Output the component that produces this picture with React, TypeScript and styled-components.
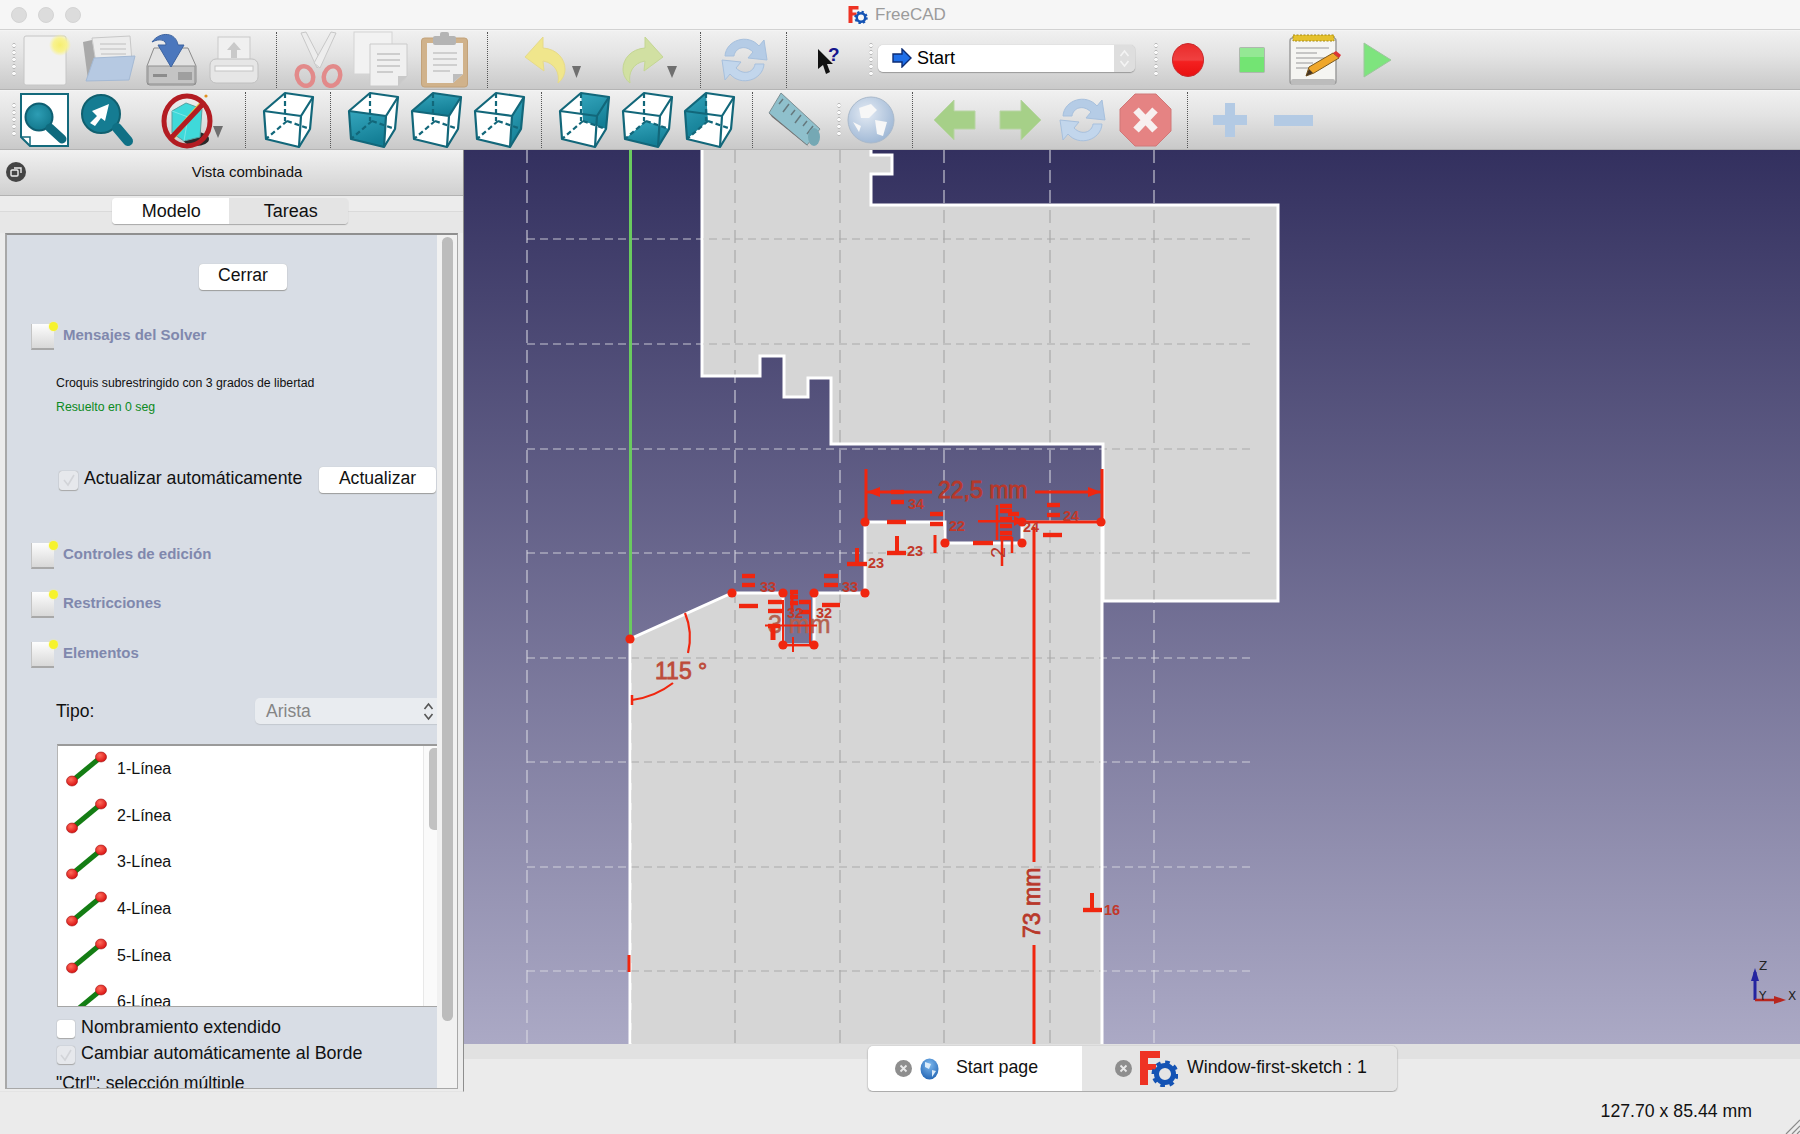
import React from 'react';
import styled, { createGlobalStyle } from 'styled-components';

const GlobalStyle = createGlobalStyle`
    html, body {
        margin: 0;
        padding: 0;
        background: #ebebeb;
    }
    body {
        font-family: "Liberation Sans", Arial, sans-serif;
        color: #111;
    }
`;

const Page = styled.div`
    width: 1800px;
    height: 1134px;
    display: flex;
    flex-direction: column;
    overflow: hidden;
    background: #ebebeb;
`;

const TitleBar = styled.div`
    height: 30px;
    box-sizing: border-box;
    flex-shrink: 0;
    display: flex;
    align-items: center;
    padding-left: 11px;
    gap: 11px;
    position: relative;
    background: #f6f6f6;
    border-bottom: 1px solid #d2d2d2;
`;

const Light = styled.span`
    width: 16px;
    height: 16px;
    border-radius: 50%;
    background: #dcdcdc;
    border: 1px solid #d4d4d4;
    box-sizing: border-box;
`;

const TitleCenter = styled.div`
    position: absolute;
    left: 848px;
    top: 5px;
    display: flex;
    align-items: center;
    gap: 7px;
    font-size: 17px;
    color: #9b9b9b;
`;

const ToolbarRow = styled.div`
    height: 60px;
    flex-shrink: 0;
    box-sizing: border-box;
    display: flex;
    align-items: center;
    padding-left: 11px;
    background: linear-gradient(#f0f0f0, #e4e4e4 40%, #c9c9c9);
    border-bottom: 1px solid #b4b4b4;
    border-top: 1px solid #f4f4f4;
`;

const Tool = styled.svg<{ $gap?: number }>`
    flex-shrink: 0;
    margin-left: ${p => p.$gap ?? 0}px;
    overflow: visible;
`;

const Sep = styled.div<{ $gap: number }>`
    width: 0;
    height: 56px;
    flex-shrink: 0;
    margin-left: ${p => p.$gap}px;
    border-left: 1px dotted #555;
`;

const Handle = styled.div<{ $gap?: number }>`
    width: 6px;
    height: 36px;
    flex-shrink: 0;
    margin-left: ${p => p.$gap ?? 0}px;
    background-image: radial-gradient(circle, #fafafa 1.6px, #b5b5b5 2px, transparent 2.6px);
    background-size: 6px 7px;
`;

const Combo = styled.div<{ $gap: number }>`
    width: 257px;
    height: 27px;
    flex-shrink: 0;
    margin-left: ${p => p.$gap}px;
    margin-bottom: 4px;
    display: flex;
    border-radius: 5px;
    overflow: hidden;
    box-shadow: 0 1px 1px #9a9a9a, 0 0 1px #aaa;
`;

const ComboField = styled.div`
    flex: 1;
    display: flex;
    align-items: center;
    gap: 5px;
    padding-left: 14px;
    background: #fff;
    font-size: 18px;
    color: #000;
`;

const ComboStepper = styled.div`
    width: 21px;
    display: flex;
    align-items: center;
    justify-content: center;
    background: #dedede;
`;

const Main = styled.div`
    display: flex;
    height: 942px;
    flex-shrink: 0;
`;

const Panel = styled.div`
    width: 463px;
    flex-shrink: 0;
    display: flex;
    flex-direction: column;
    background: #ececec;
    border-right: 1px solid #8d8d8d;
    border-bottom: 1px solid #e4e4e4;
    height: 941px;
`;

const PanelHeader = styled.div`
    height: 46px;
    flex-shrink: 0;
    position: relative;
    display: flex;
    align-items: center;
    justify-content: center;
    font-size: 15px;
    background: linear-gradient(#f1f1f1, #d0d0d0);
    border-bottom: 1px solid #b2b2b2;
    box-sizing: border-box;
    padding-left: 31px;
    padding-bottom: 3px;
`;

const FloatButton = styled.span`
    position: absolute;
    left: 6px;
    top: 12px;
    width: 20px;
    height: 20px;
    border-radius: 50%;
    background: #454545;
    display: flex;
    align-items: center;
    justify-content: center;
`;

const TabRow = styled.div`
    height: 37px;
    flex-shrink: 0;
    padding: 2px 0 0 112px;
    box-sizing: border-box;
    background: linear-gradient(#ececec 15px, #dadada 15px, #dadada 16px, #e7e7e7 16px);
`;

const PanelTabs = styled.div`
    width: 236px;
    height: 26px;
    display: flex;
    border-radius: 4px;
    overflow: hidden;
    box-shadow: 0 1px 1px #a8a8a8;
`;

const PanelTab = styled.div<{ $active?: boolean }>`
    flex: 1;
    display: flex;
    align-items: center;
    justify-content: center;
    font-size: 18px;
    padding-left: ${p => (p.$active ? 2 : 5)}px;
    background: ${p => (p.$active ? '#fff' : '#e4e4e4')};
`;

const Pane = styled.div`
    width: 453px;
    height: 856px;
    margin-left: 5px;
    box-sizing: border-box;
    display: flex;
    border: 2px solid #a8a8a8;
    border-right-width: 1px;
    border-bottom-width: 1px;
    border-top-color: #8f8f8f;
`;

const PaneContent = styled.div`
    width: 430px;
    flex-shrink: 0;
    background: #d8dde5;
    overflow: hidden;
`;

const PaneGutter = styled.div`
    flex: 1;
    background: #f1f1f1;
    padding: 2px 0 0 5px;
`;

const PaneThumb = styled.div`
    width: 11px;
    height: 784px;
    border-radius: 6px;
    background: #bcbcbc;
`;

const PushButton = styled.div<{ $w: number }>`
    width: ${p => p.$w}px;
    height: 26px;
    flex-shrink: 0;
    display: flex;
    align-items: center;
    justify-content: center;
    padding-bottom: 3px;
    box-sizing: border-box;
    background: #fff;
    border-radius: 4px;
    font-size: 17.6px;
    box-shadow: 0 1px 1px #9c9c9c, 0 0 1px #b8b8b8;
`;

const CloseRow = styled.div`
    padding: 29px 0 0 192px;
`;

const TaskHeader = styled.div<{ $top: number }>`
    display: flex;
    margin: ${p => p.$top}px 0 0 24px;
    gap: 9px;
`;

const TaskIcon = styled.div`
    width: 23px;
    height: 26px;
    position: relative;
    background: linear-gradient(#fdfdfd, #d8d8d8);
    border-bottom: 2px solid #a8a8a8;
    border-left: 1px solid #c4c4c4;
    box-sizing: border-box;

    &::after {
        content: '';
        position: absolute;
        top: -2px;
        right: -4px;
        width: 9px;
        height: 9px;
        border-radius: 50%;
        background: #f6f22c;
        box-shadow: 0 0 2px #f8f48a;
    }
`;

const TaskTitle = styled.div`
    font-size: 15px;
    font-weight: bold;
    line-height: 22px;
    color: #8088ad;
`;

const Message = styled.div<{ $top: number; $green?: boolean }>`
    margin: ${p => p.$top}px 0 0 49px;
    font-size: 12.3px;
    line-height: 20px;
    color: ${p => (p.$green ? '#0c8a22' : '#111')};
`;

const AutoRow = styled.div`
    margin: 50px 1px 0 52px;
    height: 26px;
    display: flex;
    align-items: center;
    justify-content: space-between;
    font-size: 17.7px;
`;

const CheckGroup = styled.div`
    display: flex;
    align-items: center;
`;

const CheckBox = styled.span<{ $checked?: boolean; $size: number }>`
    width: ${p => p.$size}px;
    height: ${p => p.$size}px;
    flex-shrink: 0;
    box-sizing: border-box;
    border-radius: 3px;
    display: flex;
    align-items: center;
    justify-content: center;
    background: ${p => (p.$checked ? '#e6e8ec' : '#fff')};
    box-shadow: 0 0 1px #8d8d8d, 0 1px 1px #aaa;
`;

const CheckLabel = styled.span`
    margin-left: 6px;
    white-space: nowrap;
    padding-bottom: 3px;
`;

const TypeRow = styled.div`
    margin: 30px -8px 0 49px;
    height: 26px;
    display: flex;
    align-items: center;
    justify-content: space-between;
    font-size: 17.5px;
`;

const TypeSelect = styled.div`
    width: 190px;
    height: 26px;
    box-sizing: border-box;
    display: flex;
    align-items: center;
    justify-content: space-between;
    padding: 0 11px 0 11px;
    background: #e9ecf0;
    color: #858585;
    border-radius: 5px;
    box-shadow: 0 1px 1px #c4c8cf;
`;

const ElementList = styled.div`
    margin: 20px 0 0 50px;
    height: 263px;
    box-sizing: border-box;
    display: flex;
    background: #fff;
    border-top: 2px solid #9a9a9a;
    border-left: 1px solid #b5b5b5;
    border-bottom: 1px solid #a5a5a5;
    overflow: hidden;
`;

const ElementRows = styled.div`
    flex: 1;
    overflow: hidden;
`;

const ElementRow = styled.div`
    height: 46.6px;
    display: flex;
    align-items: center;
    padding-left: 8px;
    font-size: 16px;
    gap: 10px;
`;

const LineGlyph = styled.svg`
    flex-shrink: 0;
`;

const ListGutter = styled.div`
    width: 14px;
    flex-shrink: 0;
    background: #fafafa;
    border-left: 1px solid #e8e8e8;
    padding: 2px 0 0 5px;
    box-sizing: border-box;
`;

const ListThumb = styled.div`
    width: 9px;
    height: 82px;
    border-radius: 5px 0 0 5px;
    background: #c2c2c2;
`;

const OptionRow = styled.div<{ $top: number }>`
    margin: ${p => p.$top}px 0 0 50px;
    height: 18px;
    display: flex;
    align-items: center;
    font-size: 17.9px;
`;

const HintLine = styled.div`
    margin: 8px 0 0 49px;
    font-size: 17.6px;
    line-height: 22px;
    white-space: nowrap;
`;

const ViewColumn = styled.div`
    flex: 1;
    display: flex;
    flex-direction: column;
`;

const Viewport = styled.div`
    height: 894px;
    flex-shrink: 0;
    background: linear-gradient(#33305f, #aba9c5);
`;

const SketchArea = styled.svg`
    display: block;
`;

const TabStrip = styled.div`
    flex: 1;
    padding: 2px 0 0 404px;
    background: linear-gradient(#e1e1e1 15px, #ebebeb 15px);
`;

const DocTabs = styled.div`
    width: 529px;
    height: 45px;
    display: flex;
    border-radius: 5px;
    overflow: hidden;
    box-shadow: 0 1px 2px #999, 0 0 1px #aaa;
`;

const DocTab = styled.div<{ $active?: boolean; $w: number; $pad: number }>`
    width: ${p => p.$w}px;
    flex-shrink: 0;
    box-sizing: border-box;
    display: flex;
    align-items: center;
    gap: 8px;
    padding-left: ${p => p.$pad}px;
    font-size: 17.8px;
    background: ${p => (p.$active ? '#fff' : '#e5e5e5')};
`;

const DocTabLabel = styled.span<{ $gap: number }>`
    margin-left: ${p => p.$gap}px;
    white-space: nowrap;
    padding-bottom: 3px;
`;

const StatusBar = styled.div`
    flex: 1;
    position: relative;
    display: flex;
    justify-content: flex-end;
    align-items: center;
    padding: 0 48px 4px 0;
    font-size: 17.7px;
    background: #ebebeb;
`;

const Grip = styled.svg`
    position: absolute;
    right: 0;
    bottom: 0;
`;

type ToolProps = { gap?: number };

/* ---------- toolbar drawings ---------- */

const NewIcon = ({ gap }: ToolProps) => (
    <Tool $gap={gap} width="46" height="52" viewBox="0 0 46 52">
        <defs>
            <radialGradient id="newGlow">
                <stop offset="0" stopColor="#f6ee70" />
                <stop offset="0.6" stopColor="#f8f290" />
                <stop offset="1" stopColor="#f8f290" stopOpacity="0" />
            </radialGradient>
        </defs>
        <rect x="1" y="2" width="42" height="49" rx="2" fill="#f1f1f1" stroke="#c6c6c6" />
        <circle cx="37" cy="11" r="11" fill="url(#newGlow)" />
    </Tool>
);

const OpenIcon = ({ gap }: ToolProps) => (
    <Tool $gap={gap} width="56" height="48" viewBox="0 0 56 48">
        <path d="M3 6 L12 4 L20 44 L8 44 Z" fill="#a9a9a9" />
        <path d="M12 2 L50 0 L52 26 L18 40 Z" fill="#ececec" stroke="#c8c8c8" />
        <path d="M20 8 H46 M20 13 H46 M21 18 H46" stroke="#cdcdcd" strokeWidth="1.5" />
        <path d="M14 22 L55 20 L49 44 L6 45 Z" fill="#b6c9e2" stroke="#a4b9d4" />
    </Tool>
);

const SaveIcon = ({ gap }: ToolProps) => (
    <Tool $gap={gap} width="51" height="52" viewBox="0 0 51 52">
        <path d="M8 14 H42 L50 32 V48 Q50 51 47 51 H4 Q1 51 1 48 V32 Z" fill="#e2e2e2" stroke="#8b8b8b" />
        <rect x="2" y="32" width="47" height="18" fill="#c4c4c4" stroke="#8f8f8f" />
        <rect x="32" y="38" width="14" height="8" fill="#9f9f9f" />
        <rect x="7" y="40" width="14" height="3" fill="#8c8c8c" />
        <path d="M6 8 C14 -3 30 -2 32 11 L38 11 L25 33 L12 11 L20 11 C20 6 14 4 6 8 Z" fill="#4b77bd" stroke="#3d639f" />
    </Tool>
);

const PrintIcon = ({ gap }: ToolProps) => (
    <Tool $gap={gap} width="50" height="48" viewBox="0 0 50 48">
        <rect x="9" y="1" width="32" height="26" fill="#f0f0f0" stroke="#c9c9c9" />
        <path d="M25 6 L32 14 H28 V22 H22 V14 H18 Z" fill="#c9c9c9" />
        <rect x="1" y="23" width="48" height="24" rx="6" fill="#e6e6e6" stroke="#c0c0c0" />
        <rect x="6" y="30" width="38" height="5" fill="#f7f7f7" stroke="#c4c4c4" />
    </Tool>
);

const CutIcon = ({ gap }: ToolProps) => (
    <Tool $gap={gap} width="49" height="56" viewBox="0 0 49 56">
        <path d="M7 1 L12 0 L28 31 L23 36 Z" fill="#ededed" stroke="#c8c8c8" />
        <path d="M42 1 L37 0 L20 31 L26 36 Z" fill="#ededed" stroke="#c8c8c8" />
        <ellipse cx="11" cy="44" rx="8" ry="10" transform="rotate(-20 11 44)" fill="none" stroke="#e28a8a" strokeWidth="4.5" />
        <ellipse cx="38" cy="44" rx="8" ry="10" transform="rotate(20 38 44)" fill="none" stroke="#e28a8a" strokeWidth="4.5" />
    </Tool>
);

const CopyIcon = ({ gap }: ToolProps) => (
    <Tool $gap={gap} width="56" height="56" viewBox="0 0 56 56">
        <rect x="1" y="0" width="38" height="42" fill="#f2f2f2" stroke="#d4d4d4" />
        <path d="M17 12 H54 V44 L45 54 H17 Z" fill="#f0f0f0" stroke="#cacaca" />
        <path d="M45 54 L45 44 H54 Z" fill="#c9c9c9" />
        <path d="M24 22 H47 M24 28 H47 M24 34 H47 M24 40 H40" stroke="#cdcdcd" strokeWidth="2" />
    </Tool>
);

const PasteIcon = ({ gap }: ToolProps) => (
    <Tool $gap={gap} width="49" height="56" viewBox="0 0 49 56">
        <rect x="1.5" y="6" width="46" height="49" rx="3" fill="#d0b28b" stroke="#c2a27a" />
        <path d="M7 11 H43 V42 L33 51 H7 Z" fill="#efefef" />
        <path d="M33 51 L43 42 H33 Z" fill="#bdbdbd" />
        <path d="M13 21 H37 M13 27 H37 M13 33 H37 M13 39 H30" stroke="#cfcfcf" strokeWidth="2" />
        <rect x="13" y="4" width="23" height="9" rx="2" fill="#b4b4b4" />
        <rect x="20" y="0" width="9" height="6" rx="2" fill="#b4b4b4" />
    </Tool>
);

const ARROW_BACK = 'M0 20 L18 0 L18 11 C32 12 40 22 40 32 C40 38 37 43 33 46 C35 36 30 26 18 24 L19 34 Z';

const UndoIcon = ({ gap }: ToolProps) => (
    <Tool $gap={gap} width="40" height="46" viewBox="0 0 40 46">
        <path d={ARROW_BACK} fill="#f0e68c" stroke="#e6da8a" />
    </Tool>
);

const RedoIcon = ({ gap }: ToolProps) => (
    <Tool $gap={gap} width="40" height="46" viewBox="0 0 40 46">
        <path d={ARROW_BACK} transform="translate(40 0) scale(-1 1)" fill="#d1e0a2" stroke="#c4d694" />
    </Tool>
);

const MiniArrow = ({ gap, w }: ToolProps & { w: number }) => (
    <Tool $gap={gap} width={w} height="40" viewBox={`0 0 ${w} 40`}>
        <path d={`M0 26 H${w} L${w / 2} 38 Z`} fill="#6f6f6f" />
    </Tool>
);

const RefreshIcon = ({ gap }: ToolProps) => (
    <Tool $gap={gap} width="47" height="48" viewBox="0 0 47 48">
        <path d="M4 20 C5 4 27 -3 38 10 L43 4 L46 24 L27 22 L32 16 C24 8 14 12 13 20 Z" fill="#b5cce6" stroke="#a7c0dd" />
        <path d="M43 28 C42 44 20 51 9 38 L4 44 L1 24 L20 26 L15 32 C23 40 33 36 34 28 Z" fill="#c2d6ec" stroke="#a7c0dd" />
    </Tool>
);

const HelpIcon = ({ gap }: ToolProps) => (
    <Tool $gap={gap} width="24" height="30" viewBox="0 0 24 30">
        <path d="M0 4 L0 24 L5 20 L8 29 L12 27 L9 19 L15 19 Z" fill="#111" />
        <text x="10" y="16" fontSize="19" fontWeight="bold" fontFamily="Liberation Sans" fill="#14148c">?</text>
    </Tool>
);

const RecordIcon = ({ gap }: ToolProps) => (
    <Tool $gap={gap} width="32" height="34" viewBox="0 0 32 34">
        <defs>
            <linearGradient id="recFill" x1="0" y1="0" x2="0" y2="1">
                <stop offset="0" stopColor="#e92b2b" />
                <stop offset="0.5" stopColor="#f04040" />
                <stop offset="0.55" stopColor="#f42020" />
                <stop offset="1" stopColor="#e81010" />
            </linearGradient>
        </defs>
        <ellipse cx="16" cy="17" rx="15.5" ry="16.5" fill="url(#recFill)" stroke="#c9292c" />
    </Tool>
);

const StopSquare = ({ gap }: ToolProps) => (
    <Tool $gap={gap} width="26" height="26" viewBox="0 0 26 26">
        <rect x="0.5" y="0.5" width="25" height="25" rx="1" fill="#73e473" stroke="#aeb8ae" />
        <rect x="1" y="1" width="24" height="9" fill="#94e894" />
    </Tool>
);

const NotepadIcon = ({ gap }: ToolProps) => (
    <Tool $gap={gap} width="52" height="52" viewBox="0 0 52 52">
        <rect x="1" y="4" width="46" height="46" rx="3" fill="#f5f5f2" stroke="#9d9d9d" strokeWidth="1.5" />
        <rect x="2" y="45" width="44" height="6" rx="2" fill="#bcbcbc" />
        <rect x="4" y="1" width="41" height="6" fill="#e5c12d" stroke="#a38917" strokeDasharray="2 1.5" />
        <path d="M7 14 H40 M7 19 H28 M7 24 H38 M7 29 H24 M7 34 H20" stroke="#b7b7b7" strokeWidth="1.5" />
        <path d="M17 42 L20 33 L44 19 L50 24 L25 39 Z" fill="#efa72b" stroke="#7b5a20" />
        <path d="M17 42 L20 35 L24 39 Z" fill="#463626" />
        <path d="M44 19 L50 24 L52 21 L47 17 Z" fill="#d33" />
    </Tool>
);

const PlayIcon = ({ gap }: ToolProps) => (
    <Tool $gap={gap} width="29" height="36" viewBox="0 0 29 36">
        <path d="M1 1 L28 18 L1 35 Z" fill="#7ee47e" stroke="#9ec69e" />
    </Tool>
);

const FitAllIcon = ({ gap }: ToolProps) => (
    <Tool $gap={gap} width="51" height="55" viewBox="0 0 51 55">
        <defs>
            <radialGradient id="lensA" cx="0.45" cy="0.4" r="0.7">
                <stop offset="0" stopColor="#2d9db4" />
                <stop offset="1" stopColor="#0f7387" />
            </radialGradient>
        </defs>
        <path d="M2 1 H49 V53 H11 L2 44 Z" fill="#fff" stroke="#146a7c" strokeWidth="2" />
        <path d="M2 44 H11 V53" fill="none" stroke="#146a7c" strokeWidth="1.5" />
        <circle cx="20" cy="24" r="13.5" fill="url(#lensA)" stroke="#0f5f72" strokeWidth="2" />
        <path d="M31 35 L43 46" stroke="#0f6a7d" strokeWidth="9" strokeLinecap="round" />
    </Tool>
);

const FitSelIcon = ({ gap }: ToolProps) => (
    <Tool $gap={gap} width="54" height="55" viewBox="0 0 54 55">
        <circle cx="20" cy="21" r="19" fill="#157c92" stroke="#10606f" strokeWidth="2" />
        <path d="M9 30 L16 23 L11 18 L28 11 L24 28 L20 25 L14 33 Z" fill="#fff" />
        <path d="M36 35 L47 48" stroke="#0f7085" strokeWidth="10" strokeLinecap="round" />
    </Tool>
);

const NoPicIcon = ({ gap }: ToolProps) => (
    <Tool $gap={gap} width="51" height="55" viewBox="0 0 51 55">
        <ellipse cx="34" cy="46" rx="13" ry="7" fill="#2a2a2a" />
        <path d="M10 18 L24 10 L40 16 L38 44 L22 48 L10 40 Z" fill="#3fd9da" stroke="#5aa0a0" />
        <path d="M10 18 L26 24 L40 16 M26 24 L22 48" fill="none" stroke="#7ce7e7" />
        <path d="M9 46 L42 8" stroke="#e8c84a" strokeWidth="5" />
        <ellipse cx="25" cy="28" rx="23" ry="25" fill="none" stroke="#b31c22" strokeWidth="5" />
        <path d="M9 45 L42 10" stroke="#b31c22" strokeWidth="5" />
        <circle cx="44" cy="3" r="1.6" fill="#e09020" />
    </Tool>
);

type Face = 'front' | 'top' | 'right' | 'back' | 'bottom' | 'left';

const FACES: Record<Face, string> = {
    front: '1,19 38,24 36,55 3,47',
    top: '22,1 50,5 38,24 1,19',
    right: '38,24 50,5 47,37 36,55',
    back: '22,1 50,5 47,37 24,29',
    bottom: '3,47 36,55 47,37 24,29',
    left: '22,1 1,19 3,47 24,29',
};

const Cube = ({ gap, face }: ToolProps & { face?: Face }) => (
    <Tool $gap={gap} width="51" height="56" viewBox="0 0 51 56">
        <defs>
            <linearGradient id="cubeFace" x1="0" y1="0" x2="0.3" y2="1">
                <stop offset="0" stopColor="#35a6bd" />
                <stop offset="1" stopColor="#137e95" />
            </linearGradient>
        </defs>
        <polygon points="22,1 50,5 47,37 36,55 3,47 1,19" fill="#fff" />
        {face && <polygon points={FACES[face]} fill="url(#cubeFace)" />}
        <g fill="none" stroke="#12677a" strokeWidth="2.2" strokeLinejoin="round">
            <path d="M22 1 V29 M24 29 L3 47 M24 29 L47 37" strokeDasharray="5 3" />
            <polygon points="22,1 50,5 47,37 36,55 3,47 1,19" />
            <path d="M1 19 L38 24 L36 55 M38 24 L50 5" />
        </g>
    </Tool>
);

const RulerIcon = ({ gap }: ToolProps) => (
    <Tool $gap={gap} width="51" height="54" viewBox="0 0 51 54">
        <path d="M0 20 L12 0 L51 36 L38 52 Z" fill="#8fc0cc" stroke="#7d8f94" />
        <path d="M0 20 L38 52 L40 54 L3 24 Z" fill="#6c6c6c" />
        <path d="M14 6 L10 11 M20 11 L14 19 M26 17 L22 22 M32 22 L26 30 M38 28 L34 33 M44 33 L38 41" stroke="#66797e" strokeWidth="1.5" />
        <ellipse cx="45" cy="44" rx="6" ry="9" fill="#75a8b4" />
    </Tool>
);

const GlobeIcon = ({ gap }: ToolProps) => (
    <Tool $gap={gap} width="48" height="48" viewBox="0 0 48 48">
        <defs>
            <radialGradient id="globeFill" cx="0.4" cy="0.35" r="0.7">
                <stop offset="0" stopColor="#e4ebf4" />
                <stop offset="1" stopColor="#9db6d4" />
            </radialGradient>
        </defs>
        <circle cx="24" cy="24" r="23" fill="url(#globeFill)" stroke="#a9b9cb" />
        <path d="M12 12 L24 8 L30 14 L22 22 L14 22 Z M28 24 L40 26 L36 40 L30 38 Z M6 26 L14 30 L12 36 Z" fill="#f7f7f7" />
    </Tool>
);

const NavArrow = ({ gap, flip }: ToolProps & { flip?: boolean }) => (
    <Tool $gap={gap} width="42" height="42" viewBox="0 0 42 42">
        <path
            d="M0 21 L20 1 V12 H41 V30 H20 V41 Z"
            transform={flip ? 'translate(42 0) scale(-1 1)' : undefined}
            fill="#a6d088"
            stroke="#b8d4a4"
        />
    </Tool>
);

const StopOctagon = ({ gap }: ToolProps) => (
    <Tool $gap={gap} width="53" height="54" viewBox="0 0 53 54">
        <polygon points="16,1 37,1 52,16 52,38 37,53 16,53 1,38 1,16" fill="#e58383" stroke="#d07878" />
        <path d="M17 17 L36 37 M36 17 L17 37" stroke="#f7f0f0" strokeWidth="7.5" />
    </Tool>
);

const PlusIcon = ({ gap }: ToolProps) => (
    <Tool $gap={gap} width="34" height="34" viewBox="0 0 34 34">
        <path d="M12 0 H22 V12 H34 V22 H22 V34 H12 V22 H0 V12 H12 Z" fill="#b3cae4" />
    </Tool>
);

const MinusIcon = ({ gap }: ToolProps) => (
    <Tool $gap={gap} width="39" height="11" viewBox="0 0 39 11">
        <rect width="39" height="11" fill="#b3cae4" />
    </Tool>
);

const BlueArrow = () => (
    <svg width="20" height="20" viewBox="0 0 20 20">
        <path d="M19 10 L10 1 V6 H1 V14 H10 V19 Z" fill="#1f6fe8" stroke="#0c2c74" strokeWidth="1.4" />
    </svg>
);

const Stepper = ({ color }: { color: string }) => (
    <svg width="11" height="19" viewBox="0 0 11 19">
        <path d="M1.5 7 L5.5 2 L9.5 7 M1.5 12 L5.5 17 L9.5 12" fill="none" stroke={color} strokeWidth="1.6" />
    </svg>
);

const LogoMark = ({ w, h }: { w: number; h: number }) => (
    <svg width={w} height={h} viewBox="0 0 38 36">
        <path d="M0 0 H20 V7 H8 V13 H16 V19 H8 V34 H0 Z" fill="#ee3324" />
        <circle cx="25" cy="23" r="8.5" fill="none" stroke="#1453b4" strokeWidth="5" />
        <circle cx="25" cy="23" r="11.5" fill="none" stroke="#1453b4" strokeWidth="4" strokeDasharray="4.5 4.5" />
    </svg>
);

const CloseDot = () => (
    <svg width="17" height="17" viewBox="0 0 17 17">
        <circle cx="8.5" cy="8.5" r="8.5" fill="#8e8e8e" />
        <path d="M5.5 5.5 L11.5 11.5 M11.5 5.5 L5.5 11.5" stroke="#e8e8e8" strokeWidth="1.8" />
    </svg>
);

const TabGlobe = () => (
    <svg width="19" height="22" viewBox="0 0 19 22">
        <defs>
            <radialGradient id="tabGlobe" cx="0.5" cy="0.3" r="0.8">
                <stop offset="0" stopColor="#7db8ee" />
                <stop offset="1" stopColor="#1a5dae" />
            </radialGradient>
        </defs>
        <ellipse cx="9.5" cy="11" rx="9" ry="10.5" fill="url(#tabGlobe)" />
        <path d="M5 4 L11 6 L9 11 L5 9 Z M12 12 L16 13 L12 19 Z" fill="#dcecfa" />
    </svg>
);

const LineElement = () => (
    <LineGlyph width="41" height="36" viewBox="0 0 41 36">
        <defs>
            <radialGradient id="ball" cx="0.4" cy="0.35" r="0.7">
                <stop offset="0" stopColor="#ff6a5a" />
                <stop offset="1" stopColor="#d70d0d" />
            </radialGradient>
        </defs>
        <path d="M6 30 L35 6" stroke="#147d14" strokeWidth="5" />
        <ellipse cx="6" cy="30" rx="5.5" ry="5" fill="url(#ball)" stroke="#a01010" strokeWidth="0.6" />
        <ellipse cx="35" cy="6" rx="5.5" ry="5" fill="url(#ball)" stroke="#a01010" strokeWidth="0.6" />
    </LineGlyph>
);

const CheckMark = () => (
    <svg width="14" height="14" viewBox="0 0 14 14">
        <path d="M2 7 L6 12 L12 2" fill="none" stroke="#d2d4d8" strokeWidth="1.6" />
    </svg>
);

/* ---------- sketch in the 3D view, drawn in page coordinates ---------- */

const UPPER_PART =
    'M702 148 V376 H760 V356 H784 V397 H808 V378 H831 V444 H1103 V601 H1278 V205 H871 V174 H892 V155 H871 V148 Z';
const LOWER_PART =
    'M630 1046 V639 L732 593 H783 V645 H814 V593 H865 V522 H945 V543 H1022 V522 H1102 V1046 Z';

const GRID_X = [527, 631, 735, 840, 944, 1050, 1154];
const GRID_Y = [239, 344, 449, 553, 658, 762, 867, 971];

const RED = '#f0260f';
const DIM = '#b8382a';

// x0, x1, y
const RED_BARS: number[][] = [
    [891, 904, 492], [891, 904, 502], [887, 906, 522],
    [930, 943, 514], [930, 943, 524], [887, 906, 553],
    [847, 867, 564], [1047, 1060, 505], [1047, 1060, 515],
    [1043, 1062, 535], [973, 993, 543], [1008, 1019, 514],
    [1000, 1012, 506], [1000, 1012, 511], [1000, 1012, 519],
    [1000, 1012, 526], [1000, 1012, 533], [1000, 1012, 538],
    [742, 755, 576], [742, 755, 585], [824, 838, 576], [824, 838, 585],
    [739, 758, 606], [768, 782, 602], [768, 782, 611], [799, 811, 602],
    [799, 811, 612], [822, 840, 605], [790, 798, 592], [790, 798, 597],
    [790, 798, 603], [1083, 1102, 910], [768, 780, 626],
];

// x, y0, y1, width
const RED_STEMS: number[][] = [
    [866, 469, 522, 3], [1102, 469, 522, 3], [897, 536, 552, 4],
    [857, 548, 563, 4], [935, 535, 553, 3], [1034, 527, 862, 3],
    [1034, 945, 1044, 3], [1092, 893, 909, 4], [629, 955, 972, 3],
    [997, 505, 540, 2.5], [1002, 540, 566, 2.5], [1012, 537, 553, 2.5],
    [773, 627, 640, 5], [783, 600, 645, 2], [810, 603, 645, 2],
    [793, 637, 652, 2], [792, 592, 612, 3], [632, 695, 705, 2.5],
];

// x, y, text
const RED_LABELS: [number, number, string][] = [
    [908, 509, '34'], [949, 531, '22'], [907, 556, '23'],
    [868, 568, '23'], [1063, 521, '24'], [1023, 532, '24'],
    [760, 592, '33'], [842, 592, '33'], [816, 618, '32'],
    [787, 618, '32'], [1104, 915, '16'],
];

const DOTS: number[][] = [
    [630, 639], [732, 593], [783, 593], [814, 593], [865, 593], [865, 522],
    [945, 543], [1022, 543], [1022, 522], [1101, 522], [783, 645], [814, 645],
];

const Sketch = () => (
    <SketchArea width="1336" height="894" viewBox="464 150 1336 894">
        <defs>
            <clipPath id="partClip">
                <path d={UPPER_PART} />
                <path d={LOWER_PART} />
            </clipPath>
        </defs>

        <g stroke="#dcdce4" strokeOpacity="0.85" strokeWidth="1.2">
            {GRID_X.map(x => <path key={x} d={`M${x} 150 V1044`} strokeDasharray="13 7" />)}
            {GRID_Y.map(y => <path key={y} d={`M527 ${y} H1254`} strokeDasharray="8 5" />)}
        </g>

        <path d="M630.5 150 V640" stroke="#6acb5e" strokeWidth="3" />

        <path d={UPPER_PART} fill="#d6d6d6" />
        <path d={LOWER_PART} fill="#d6d6d6" />

        <g stroke="#a9a9a9" strokeWidth="1.2" clipPath="url(#partClip)">
            {GRID_X.map(x => <path key={x} d={`M${x} 150 V1044`} strokeDasharray="13 7" />)}
            {GRID_Y.map(y => <path key={y} d={`M527 ${y} H1254`} strokeDasharray="8 5" />)}
        </g>

        <path d={UPPER_PART} fill="none" stroke="#fff" strokeWidth="3" />
        <path d={LOWER_PART} fill="none" stroke="#fff" strokeWidth="3" />

        <text x="768" y="633" fontFamily="Liberation Sans" fontSize="25" fill="#b5604f" stroke="#b5604f" strokeWidth="0.5">3 mm</text>

        <g fill={RED}>
            {RED_BARS.map(([a, b, y]) => (
                <rect key={`${a}-${y}`} x={a} y={y - 2.2} width={b - a} height="4.4" />
            ))}
            {RED_STEMS.map(([x, a, b, w]) => (
                <rect key={`${x}-${a}`} x={x - w / 2} y={a} width={w} height={b - a} />
            ))}
            <rect x="1022" y="520.5" width="80" height="3" />
            <rect x="978" y="520" width="42" height="2.5" />
            <rect x="765" y="624.5" width="52" height="2" />
            <rect x="780" y="644" width="36" height="2.5" />
            <rect x="866" y="490.5" width="66" height="3" />
            <rect x="1035" y="490.5" width="67" height="3" />
            <path d="M867 492 L880 487 V497 Z M1101 492 L1088 487 V497 Z M1023 521 L1014 516 V526 Z" />
            {DOTS.map(([x, y]) => <circle key={`${x}-${y}`} cx={x} cy={y} r="4.6" />)}
        </g>

        <g fontFamily="Liberation Sans" fontWeight="bold" fontSize="14.5" fill="#c2382a">
            {RED_LABELS.map(([x, y, t]) => <text key={`${x}-${y}`} x={x} y={y}>{t}</text>)}
        </g>

        <path d="M685 613 Q693 632 688 653 M673 683 Q655 697 632 700" fill="none" stroke={RED} strokeWidth="2.2" />

        <g fontFamily="Liberation Sans" fill={DIM}>
            <text x="938" y="498" fontSize="23" stroke={DIM} strokeWidth="0.8">22,5 mm</text>
            <text x="655" y="679" fontSize="23" fill="#bd4b3a" stroke="#bd4b3a" strokeWidth="0.8">115 °</text>
            <text x="1040" y="938" fontSize="23" stroke={DIM} strokeWidth="0.7" transform="rotate(-90 1040 938)">73 mm</text>
            <text x="1005" y="558" fontSize="20" transform="rotate(-90 1005 558)">2</text>
        </g>

        <g>
            <path d="M1755 1000 V972" stroke="#2424a0" strokeWidth="3" />
            <path d="M1755 968 L1751 981 H1759 Z" fill="#2424a0" />
            <path d="M1755 1000 H1781" stroke="#b8261e" strokeWidth="2.5" />
            <path d="M1786 1000 L1774 996 V1004 Z" fill="#b8261e" />
            <g fontFamily="DejaVu Sans" fontSize="12" fill="#222">
                <text x="1759" y="970">Z</text>
                <text x="1759" y="1000">Y</text>
                <text x="1788" y="1000">X</text>
            </g>
        </g>
    </SketchArea>
);

const LINE_ITEMS = ['1-Línea', '2-Línea', '3-Línea', '4-Línea', '5-Línea', '6-Línea'];

const App = (): JSX.Element => {
    return (
        <Page>
            <GlobalStyle />
            <TitleBar>
                <Light />
                <Light />
                <Light />
                <TitleCenter>
                    <LogoMark w={20} h={18} />
                    FreeCAD
                </TitleCenter>
            </TitleBar>

            <ToolbarRow>
                <Handle />
                <NewIcon gap={6} />
                <OpenIcon gap={11} />
                <SaveIcon gap={10} />
                <PrintIcon gap={12} />
                <Sep $gap={17} />
                <CutIcon gap={17} />
                <CopyIcon gap={10} />
                <PasteIcon gap={11} />
                <Sep $gap={18} />
                <UndoIcon gap={37} />
                <MiniArrow gap={7} w={9} />
                <RedoIcon gap={42} />
                <MiniArrow gap={4} w={10} />
                <Sep $gap={23} />
                <RefreshIcon gap={20} />
                <Sep $gap={18} />
                <HelpIcon gap={31} />
                <Handle $gap={26} />
                <Combo $gap={4}>
                    <ComboField>
                        <BlueArrow />
                        Start
                    </ComboField>
                    <ComboStepper>
                        <Stepper color="#f4f4f4" />
                    </ComboStepper>
                </Combo>
                <Handle $gap={18} />
                <RecordIcon gap={13} />
                <StopSquare gap={35} />
                <NotepadIcon gap={24} />
                <PlayIcon gap={22} />
            </ToolbarRow>

            <ToolbarRow>
                <Handle />
                <FitAllIcon gap={2} />
                <FitSelIcon gap={11} />
                <NoPicIcon gap={27} />
                <MiniArrow w={10} />
                <Sep $gap={22} />
                <Cube gap={17} />
                <Sep $gap={16} />
                <Cube gap={17} face="front" />
                <Cube gap={12} face="top" />
                <Cube gap={12} face="right" />
                <Sep $gap={16} />
                <Cube gap={17} face="back" />
                <Cube gap={12} face="bottom" />
                <Cube gap={11} face="left" />
                <Sep $gap={17} />
                <RulerIcon gap={16} />
                <Handle $gap={16} />
                <GlobeIcon gap={5} />
                <Sep $gap={17} />
                <NavArrow gap={21} />
                <NavArrow gap={23} flip />
                <RefreshIcon gap={18} />
                <StopOctagon gap={13} />
                <Sep $gap={15} />
                <PlusIcon gap={25} />
                <MinusIcon gap={27} />
            </ToolbarRow>

            <Main>
                <Panel>
                    <PanelHeader>
                        <FloatButton>
                            <svg width="12" height="10" viewBox="0 0 12 10">
                                <rect x="1" y="3" width="7" height="6" rx="1" fill="none" stroke="#eee" strokeWidth="1.4" />
                                <path d="M4 1 H11 V6" fill="none" stroke="#eee" strokeWidth="1.4" />
                            </svg>
                        </FloatButton>
                        Vista combinada
                    </PanelHeader>
                    <TabRow>
                        <PanelTabs>
                            <PanelTab $active>Modelo</PanelTab>
                            <PanelTab>Tareas</PanelTab>
                        </PanelTabs>
                    </TabRow>
                    <Pane>
                        <PaneContent>
                            <CloseRow>
                                <PushButton $w={88}>Cerrar</PushButton>
                            </CloseRow>
                            <TaskHeader $top={34}>
                                <TaskIcon />
                                <TaskTitle>Mensajes del Solver</TaskTitle>
                            </TaskHeader>
                            <Message $top={23}>Croquis subrestringido con 3 grados de libertad</Message>
                            <Message $top={4} $green>Resuelto en 0 seg</Message>
                            <AutoRow>
                                <CheckGroup>
                                    <CheckBox $size={19} $checked><CheckMark /></CheckBox>
                                    <CheckLabel>Actualizar automáticamente</CheckLabel>
                                </CheckGroup>
                                <PushButton $w={117}>Actualizar</PushButton>
                            </AutoRow>
                            <TaskHeader $top={50}>
                                <TaskIcon />
                                <TaskTitle>Controles de edición</TaskTitle>
                            </TaskHeader>
                            <TaskHeader $top={23}>
                                <TaskIcon />
                                <TaskTitle>Restricciones</TaskTitle>
                            </TaskHeader>
                            <TaskHeader $top={24}>
                                <TaskIcon />
                                <TaskTitle>Elementos</TaskTitle>
                            </TaskHeader>
                            <TypeRow>
                                Tipo:
                                <TypeSelect>
                                    Arista
                                    <Stepper color="#555" />
                                </TypeSelect>
                            </TypeRow>
                            <ElementList>
                                <ElementRows>
                                    {LINE_ITEMS.map(item => (
                                        <ElementRow key={item}>
                                            <LineElement />
                                            {item}
                                        </ElementRow>
                                    ))}
                                </ElementRows>
                                <ListGutter>
                                    <ListThumb />
                                </ListGutter>
                            </ElementList>
                            <OptionRow $top={13}>
                                <CheckBox $size={18} />
                                <CheckLabel>Nombramiento extendido</CheckLabel>
                            </OptionRow>
                            <OptionRow $top={8}>
                                <CheckBox $size={18} $checked><CheckMark /></CheckBox>
                                <CheckLabel>Cambiar automáticamente al Borde</CheckLabel>
                            </OptionRow>
                            <HintLine>"Ctrl": selección múltiple</HintLine>
                        </PaneContent>
                        <PaneGutter>
                            <PaneThumb />
                        </PaneGutter>
                    </Pane>
                </Panel>

                <ViewColumn>
                    <Viewport>
                        <Sketch />
                    </Viewport>
                    <TabStrip>
                        <DocTabs>
                            <DocTab $active $w={214} $pad={27}>
                                <CloseDot />
                                <TabGlobe />
                                <DocTabLabel $gap={9}>Start page</DocTabLabel>
                            </DocTab>
                            <DocTab $w={315} $pad={33}>
                                <CloseDot />
                                <LogoMark w={38} h={36} />
                                <DocTabLabel $gap={1}>Window-first-sketch : 1</DocTabLabel>
                            </DocTab>
                        </DocTabs>
                    </TabStrip>
                </ViewColumn>
            </Main>

            <StatusBar>
                127.70 x 85.44 mm
                <Grip width="16" height="16" viewBox="0 0 16 16">
                    <path d="M2 16 L16 2 M8 16 L16 8 M13 16 L16 13" stroke="#8a8a8a" strokeWidth="1.2" />
                </Grip>
            </StatusBar>
        </Page>
    );
};

export default App;
